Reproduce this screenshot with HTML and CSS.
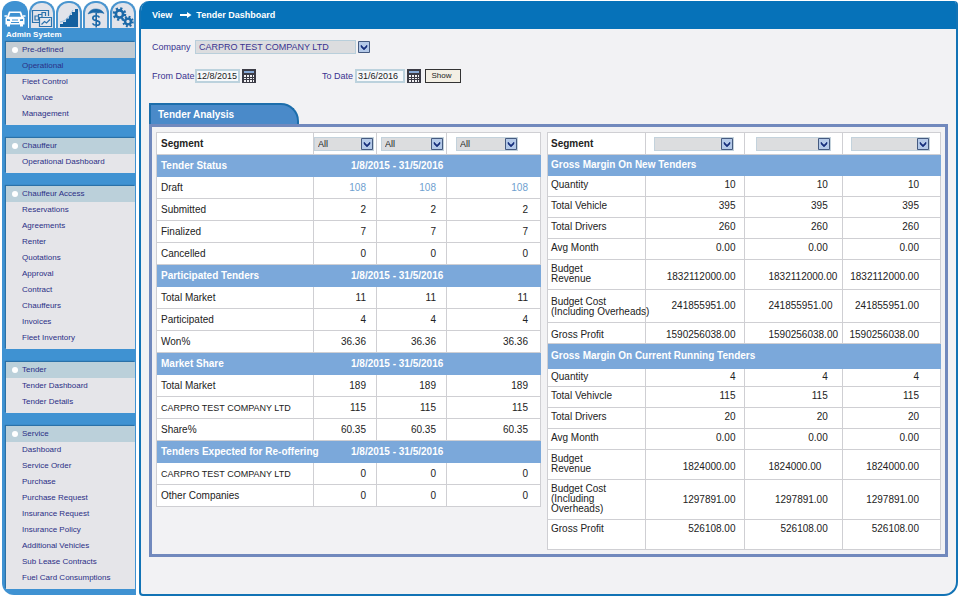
FILE: index.html
```html
<!DOCTYPE html>
<html lang="en">
<head>
    <meta charset="UTF-8">
    <meta name="viewport" content="width=device-width, initial-scale=1.0">
    <title>Tender Dashboard</title>
    <link rel="stylesheet" href="styles.css">
</head>
<body>
    <div class="sidebar">
        <div class="tabs">
            <button class="tab active" aria-label="Fleet">
                <svg viewBox="0 0 22 22" width="22" height="22">
                    <path d="M5 5.500h12l2 5 1.500 1.500v6.500h-1.500v2h-3v-2H6v2H3v-2H1.500V12L3 10.500z" fill="#fff"/>
                    <path d="M6.300 7h9.400l1.300 3.800H5z" fill="#3f92d2"/>
                    <path d="M8 14h6M7 16.500h8" stroke="#3f92d2" stroke-width="1"/>
                    <path d="M3 13l3 .5v1.500H3zM19 13l-3 .5v1.500h3z" fill="#3f92d2"/>
                    <path d="M.5 10h2.500M19 10h2.500" stroke="#fff" stroke-width="1.500"/>
                </svg>
            </button>
            <button class="tab" aria-label="Charts">
                <svg viewBox="0 0 22 22" width="22" height="22" fill="none" stroke="#2b72ad" stroke-width="1.200">
                    <path d="M8 16.500H1.500v-12h16V10"/>
                    <path d="M4 14v-4h3.500v4zM7.500 14V8.500H11V12M11 10V6.500h3.500V10"/>
                    <path d="M8.500 11.500h12v9h-12z" fill="#e3e7ee"/>
                    <path d="M10.500 18.500l3-3 2 1.500 3.500-3.500"/>
                </svg>
            </button>
            <button class="tab" aria-label="Growth">
                <svg viewBox="0 0 22 22" width="22" height="22">
                    <path d="M2 21v-3h3v-2h3v-3.500h3V9h3V6h3V3h3v18z" fill="#14609f"/>
                    <path d="M2 16c6-1 9-5 13-12" stroke="#8fbbe0" stroke-width="1" fill="none"/>
                </svg>
            </button>
            <button class="tab" aria-label="Insurance">
                <svg viewBox="0 0 22 22" width="22" height="22" fill="none" stroke="#1c69a8" stroke-width="1.600">
                    <path d="M3 8C5 4 8 2.500 12 3c3 .3 5.500 1.500 7 4.500-2-1-4-1-6-.5-3-1-6-.8-10 1z" fill="#1c69a8" stroke-width=".5"/>
                    <path d="M14.500 11.500c-.7-1.200-1.900-1.700-3.400-1.700-2 0-3.300.9-3.300 2.400 0 3.300 7 1.500 7 4.700 0 1.500-1.500 2.400-3.500 2.400-1.800 0-3.100-.7-3.800-2M11.200 7v14.500"/>
                </svg>
            </button>
            <button class="tab" aria-label="Settings">
                <svg viewBox="0 0 22 22" width="22" height="22" fill="none" stroke="#1c69a8">
                    <circle cx="7.500" cy="8" r="3.600" stroke-width="2.600"/>
                    <circle cx="7.500" cy="8" r="5.600" stroke-width="2.400" stroke-dasharray="2.200 2.200"/>
                    <circle cx="16" cy="15.500" r="2.900" stroke-width="2.400"/>
                    <circle cx="16" cy="15.500" r="4.700" stroke-width="2.200" stroke-dasharray="1.850 1.850"/>
                </svg>
            </button>
        </div>
        <div class="rail">
            <div class="rail-title">Admin System</div>
            <ul class="menu">
                <li class="menu-head grey">Pre-defined</li>
                <li class="selected"><a href="#">Operational</a></li>
                <li><a href="#">Fleet Control</a></li>
                <li><a href="#">Variance</a></li>
                <li><a href="#">Management</a></li>
            </ul>
            <ul class="menu">
                <li class="menu-head">Chauffeur</li>
                <li><a href="#">Operational Dashboard</a></li>
            </ul>
            <ul class="menu">
                <li class="menu-head">Chauffeur Access</li>
                <li><a href="#">Reservations</a></li>
                <li><a href="#">Agreements</a></li>
                <li><a href="#">Renter</a></li>
                <li><a href="#">Quotations</a></li>
                <li><a href="#">Approval</a></li>
                <li><a href="#">Contract</a></li>
                <li><a href="#">Chauffeurs</a></li>
                <li><a href="#">Invoices</a></li>
                <li><a href="#">Fleet Inventory</a></li>
            </ul>
            <ul class="menu">
                <li class="menu-head">Tender</li>
                <li><a href="#">Tender Dashboard</a></li>
                <li><a href="#">Tender Details</a></li>
            </ul>
            <ul class="menu">
                <li class="menu-head">Service</li>
                <li><a href="#">Dashboard</a></li>
                <li><a href="#">Service Order</a></li>
                <li><a href="#">Purchase</a></li>
                <li><a href="#">Purchase Request</a></li>
                <li><a href="#">Insurance Request</a></li>
                <li><a href="#">Insurance Policy</a></li>
                <li><a href="#">Additional Vehicles</a></li>
                <li><a href="#">Sub Lease Contracts</a></li>
                <li><a href="#">Fuel Card Consumptions</a></li>
            </ul>
        </div>
    </div>

    <div class="main">
        <div class="header">
            <span>View</span>
            <svg viewBox="0 0 12 8" width="12" height="8"><path d="M0 4h9" stroke="#fff" stroke-width="2"/><path d="M7 1l4.500 3L7 7z" fill="#fff"/></svg>
            <span>Tender Dashboard</span>
        </div>

        <form class="filters">
            <div class="filter-row">
                <label class="lead" for="company">Company</label>
                <select id="company" class="company"><option>CARPRO TEST COMPANY LTD</option></select>
            </div>
            <div class="filter-row">
                <label class="lead" for="from">From Date</label>
                <input class="date from" type="text" id="from" value="12/8/2015">
                <button type="button" class="cal" aria-label="Pick from date">
                    <svg viewBox="0 0 14 14" width="14" height="14"><path d="M0 0h14v14H0z" fill="#3c3c46"/><path d="M2 2h10v2H2z" fill="#86a9d6"/><path d="M2 6h2v2H2zM5 6h2v2H5zM8 6h2v2H8zM11 6h1v2h-1zM2 9h2v1H2zM5 9h2v1H5zM8 9h2v1H8zM11 9h1v1h-1zM2 11h2v2H2zM5 11h2v2H5zM8 11h2v2H8zM11 11h1v2h-1z" fill="#f2f2f4"/></svg>
                </button>
                <label class="to-label" for="to">To Date</label>
                <input class="date to" type="text" id="to" value="31/6/2016">
                <button type="button" class="cal" aria-label="Pick to date">
                    <svg viewBox="0 0 14 14" width="14" height="14"><path d="M0 0h14v14H0z" fill="#3c3c46"/><path d="M2 2h10v2H2z" fill="#86a9d6"/><path d="M2 6h2v2H2zM5 6h2v2H5zM8 6h2v2H8zM11 6h1v2h-1zM2 9h2v1H2zM5 9h2v1H5zM8 9h2v1H8zM11 9h1v1h-1zM2 11h2v2H2zM5 11h2v2H5zM8 11h2v2H8zM11 11h1v2h-1z" fill="#f2f2f4"/></svg>
                </button>
                <button type="button" class="show">Show</button>
            </div>
        </form>

        <div class="analysis">
            <h2 class="analysis-tab">Tender Analysis</h2>
            <div class="panel">
                <table class="grid status">
                    <colgroup><col class="s1"><col class="s2"><col class="s3"><col class="s4"></colgroup>
                    <tr class="segment">
                        <th>Segment</th>
                        <td><select aria-label="Segment 1"><option>All</option></select></td>
                        <td><select aria-label="Segment 2"><option>All</option></select></td>
                        <td><select aria-label="Segment 3"><option>All</option></select></td>
                    </tr>
                    <tr class="band"><th>Tender Status</th><th colspan="3">1/8/2015 - 31/5/2016</th></tr>
                    <tr><td>Draft</td><td><a href="#">108</a></td><td><a href="#">108</a></td><td><a href="#">108</a></td></tr>
                    <tr><td>Submitted</td><td>2</td><td>2</td><td>2</td></tr>
                    <tr><td>Finalized</td><td>7</td><td>7</td><td>7</td></tr>
                    <tr><td>Cancelled</td><td>0</td><td>0</td><td>0</td></tr>
                    <tr class="band"><th>Participated Tenders</th><th colspan="3">1/8/2015 - 31/5/2016</th></tr>
                    <tr><td>Total Market</td><td>11</td><td>11</td><td>11</td></tr>
                    <tr><td>Participated</td><td>4</td><td>4</td><td>4</td></tr>
                    <tr><td>Won%</td><td>36.36</td><td>36.36</td><td>36.36</td></tr>
                    <tr class="band"><th>Market Share</th><th colspan="3">1/8/2015 - 31/5/2016</th></tr>
                    <tr><td>Total Market</td><td>189</td><td>189</td><td>189</td></tr>
                    <tr><td class="name">CARPRO TEST COMPANY LTD</td><td>115</td><td>115</td><td>115</td></tr>
                    <tr><td>Share%</td><td>60.35</td><td>60.35</td><td>60.35</td></tr>
                    <tr class="band"><th>Tenders Expected for Re-offering</th><th colspan="3">1/8/2015 - 31/5/2016</th></tr>
                    <tr><td class="name">CARPRO TEST COMPANY LTD</td><td>0</td><td>0</td><td>0</td></tr>
                    <tr><td>Other Companies</td><td>0</td><td>0</td><td>0</td></tr>
                </table>

                <table class="grid margin">
                    <colgroup><col class="m1"><col class="m2"><col class="m2"><col class="m2"></colgroup>
                    <tr class="segment">
                        <th>Segment</th>
                        <td><select aria-label="Margin segment 1"><option></option></select></td>
                        <td><select aria-label="Margin segment 2"><option></option></select></td>
                        <td><select aria-label="Margin segment 3"><option></option></select></td>
                    </tr>
                    <tr class="band"><th colspan="4">Gross Margin On New Tenders</th></tr>
                    <tr><td>Quantity</td><td>10</td><td>10</td><td>10</td></tr>
                    <tr><td>Total Vehicle</td><td>395</td><td>395</td><td>395</td></tr>
                    <tr><td>Total Drivers</td><td>260</td><td>260</td><td>260</td></tr>
                    <tr><td>Avg Month</td><td>0.00</td><td>0.00</td><td>0.00</td></tr>
                    <tr class="revenue"><td>Budget<br>Revenue</td><td>1832112000.00</td><td class="long">1832112000.00</td><td>1832112000.00</td></tr>
                    <tr class="cost"><td>Budget Cost<br>(Including Overheads)</td><td>241855951.00</td><td class="long">241855951.00</td><td>241855951.00</td></tr>
                    <tr class="profit"><td>Gross Profit</td><td>1590256038.00</td><td class="long">1590256038.00</td><td>1590256038.00</td></tr>
                    <tr class="band tall"><th colspan="4">Gross Margin On Current Running Tenders</th></tr>
                    <tr class="short"><td>Quantity</td><td>4</td><td>4</td><td>4</td></tr>
                    <tr><td>Total Vehivcle</td><td>115</td><td>115</td><td>115</td></tr>
                    <tr><td>Total Drivers</td><td>20</td><td>20</td><td>20</td></tr>
                    <tr><td>Avg Month</td><td>0.00</td><td>0.00</td><td>0.00</td></tr>
                    <tr class="revenue"><td>Budget<br>Revenue</td><td>1824000.00</td><td class="long">1824000.00</td><td>1824000.00</td></tr>
                    <tr class="cost three"><td>Budget Cost<br>(Including<br>Overheads)</td><td>1297891.00</td><td>1297891.00</td><td>1297891.00</td></tr>
                    <tr class="last"><td>Gross Profit</td><td>526108.00</td><td>526108.00</td><td>526108.00</td></tr>
                </table>
            </div>
        </div>
    </div>
</body>
</html>
```

FILE: styles.css
```css
* {
    box-sizing: border-box;
}
body {
    display: flex;
    gap: 3px;
    margin: 0;
    padding: 1px 2px 2px 2px;
    min-height: 100vh;
    background: #fff;
    font-family: "Liberation Sans", Arial, sans-serif;
    font-size: 10px;
    line-height: 10px;
    color: #222;
}
button, input, select {
    font-family: inherit;
    margin: 0;
}
a {
    color: inherit;
    text-decoration: none;
}

/* sidebar */
.sidebar {
    display: flex;
    flex-direction: column;
    flex: 0 0 133px;
    padding-bottom: 1px;
}
.tabs {
    display: grid;
    grid-template-columns: repeat(5, 1fr);
    gap: 1px;
}
.tab {
    display: flex;
    align-items: flex-end;
    justify-content: center;
    height: 27px;
    padding: 0;
    border: 2px solid #4a95cf;
    border-bottom: 0;
    border-radius: 12px 12px 0 0;
    background: #e1e3ea;
}
.tab svg {
    flex: none;
}
.tab.active {
    border-color: #3f92d2;
    background: #3f92d2;
}
.rail {
    flex: 1;
    padding: 0 1px 0 4px;
    background: #3f92d2;
    border-radius: 0 0 0 12px;
}
.rail-title {
    padding: 3px 0;
    height: 14px;
    font-size: 8px;
    line-height: 8px;
    font-weight: bold;
    color: #fff;
}
.menu {
    list-style: none;
    margin: 0 0 13px;
    padding: 0 0 3px;
    background: #e5e5e9;
    box-shadow: -1px -1px 1px #2a71a8;
    font-size: 8px;
    line-height: 16px;
    color: #2b2f86;
}
.rail .menu:last-child {
    margin-bottom: 4px;
}
.menu li {
    padding-left: 16px;
}
.menu .menu-head {
    display: flex;
    align-items: center;
    gap: 4px;
    padding-left: 6px;
    background: #bbd0da;
}
.menu .menu-head.grey {
    background: #c3ccd3;
}
.menu-head::before {
    content: "";
    width: 6px;
    height: 6px;
    border-radius: 3px;
    background: #fff;
}
.menu .selected {
    background: #3f92d2;
}

/* main frame */
.main {
    flex: 1;
    min-width: 0;
    padding-bottom: 35px;
    background: #f2f2f4;
    border: 2px solid #1273b5;
    border-top: 0;
    border-radius: 10px 4px 14px 4px;
    overflow: hidden;
}
.header {
    display: flex;
    align-items: center;
    gap: 8px;
    height: 28px;
    padding-left: 11px;
    background: #0672b9;
    color: #fff;
    font-size: 9px;
    font-weight: bold;
}
.header svg {
    margin-right: -4px;
}
.filters {
    padding: 11px 11px 0;
    font-size: 9px;
    color: #3a3390;
}
.filter-row {
    display: flex;
    align-items: center;
    height: 14px;
    margin-bottom: 15px;
    white-space: nowrap;
}
.lead {
    flex: 0 0 43px;
}
.to-label {
    flex: 0 0 33px;
    margin-left: 66px;
}
select {
    appearance: none;
    height: 14px;
    padding: 0 14px 0 3px;
    border: 1px solid #c3d2dc;
    border-radius: 0;
    background: #dcdddf url("data:image/svg+xml,%3Csvg xmlns='http://www.w3.org/2000/svg' width='12' height='12'%3E%3Cpath d='M.5 .5h11v11H.5z' fill='%23b4c9e8' stroke='%23455a80'/%3E%3Cpath d='M3 4l3 3 3-3v2L6 9 3 6z' fill='%23162f7c' stroke='%23162f7c' stroke-width='.5'/%3E%3C/svg%3E") right center no-repeat;
    font-size: 9px;
    line-height: 10px;
    color: #222;
}
/* the company arrow stands apart from its box */
.company {
    width: 175px;
    padding-left: 4px;
    border: 0;
    background-color: transparent;
    background-image: url("data:image/svg+xml,%3Csvg xmlns='http://www.w3.org/2000/svg' width='12' height='12'%3E%3Cpath d='M.5 .5h11v11H.5z' fill='%23b4c9e8' stroke='%23455a80'/%3E%3Cpath d='M3 4l3 3 3-3v2L6 9 3 6z' fill='%23162f7c' stroke='%23162f7c' stroke-width='.5'/%3E%3C/svg%3E"), linear-gradient(#dcdddf, #dcdddf), linear-gradient(#b9cfdb, #b9cfdb);
    background-position: right center, 1px center, left center;
    background-size: 12px 12px, calc(100% - 16px) 12px, calc(100% - 14px) 14px;
    background-repeat: no-repeat;
    color: #3a3390;
}
.date {
    height: 14px;
    padding: 0 1px;
    border: 2px solid #bcd2dd;
    background: #f7f9fb;
    font-size: 9px;
    color: #222;
}
.date.from {
    width: 45px;
    padding: 0;
}
.date.to {
    width: 50px;
}
.cal {
    display: flex;
    margin-left: 2px;
    padding: 0;
    border: 0;
    background: none;
}
.show {
    width: 36px;
    height: 14px;
    margin-left: 4px;
    padding: 0 3px 0 0;
    border: 1px solid #333;
    background: #f3efe4;
    font-size: 8px;
    line-height: 10px;
    color: #222;
}

/* analysis panel */
.analysis {
    padding: 5px 8px 0 8px;
}
.analysis-tab {
    width: 150px;
    margin: 0;
    padding: 5px 7px 4px;
    border: 2px solid #1d6eab;
    border-bottom: 0;
    border-radius: 0 18px 0 0;
    background: #4a8ac9;
    font-size: 10px;
    line-height: 10px;
    color: #fff;
}
.panel {
    display: grid;
    grid-template-columns: 386fr 395fr;
    gap: 6px;
    align-items: start;
    padding: 5px 4px 4px;
    border: 3px solid #7189bd;
}
.grid {
    width: 100%;
    table-layout: fixed;
    border-collapse: separate;
    border-spacing: 0;
    border-top: 1px solid #cfcfd3;
    border-left: 1px solid #cfcfd3;
    background: #fff;
}
.grid td, .grid th {
    height: 22px;
    padding: 0 10px 0 4px;
    border-right: 1px solid #cfcfd3;
    border-bottom: 1px solid #cfcfd3;
    text-align: right;
    white-space: nowrap;
    color: #222;
}
.grid td:first-child, .grid th {
    padding-right: 0;
    text-align: left;
}
.grid td a {
    color: #6f9fd0;
}
.grid .band th {
    border-color: #7ba8da;
    background: #7ba8da;
    color: #fff;
}
.grid .segment td {
    padding: 0 2px 0 0;
    text-align: left;
}
.grid select {
    display: block;
    width: 100%;
}
.s1 { width: 157px; }
.s2 { width: 63px; }
.s3 { width: 70px; }

.status td:last-child {
    padding-right: 12px;
}
.status .band th:last-child {
    padding-left: 37px;
}
.status td.name {
    font-size: 9px;
}
.status .segment td:nth-child(3) {
    padding-left: 4px;
}
.status .segment td:nth-child(4) {
    padding: 0 22px 0 9px;
}

.m1 { width: 25%; }
.m2 { width: 25%; }

.margin td, .margin th {
    height: 21px;
    padding: 4px 8px 0 3px;
    vertical-align: top;
}
.margin td:nth-child(3) {
    padding-right: 14px;
}
.margin td:nth-child(4) {
    padding-right: 21px;
}
.margin .segment td, .margin .segment th {
    height: 22px;
    vertical-align: middle;
}
.margin .segment th {
    padding-top: 0;
}
.margin .segment td {
    padding: 0 10px 0 8px;
}
.margin .segment td:nth-child(3) {
    padding: 0 11px;
}
.margin .band th {
    padding-top: 5px;
}
.margin .band.tall th {
    height: 25px;
    padding-top: 7px;
}
.margin .short td {
    height: 18px;
    padding-top: 3px;
}
.margin td.long {
    padding-left: 24px;
    padding-right: 0;
    text-align: left;
}
.margin .revenue td {
    height: 30px;
}
.margin .revenue td:not(:first-child) {
    padding-top: 12px;
}
.margin .cost td {
    height: 33px;
    padding-top: 7px;
}
.margin .cost td:not(:first-child) {
    padding-top: 0;
    vertical-align: middle;
}
.margin .cost.three td {
    height: 40px;
}
.margin .cost.three td:first-child {
    padding-top: 4px;
}
.margin .profit td {
    padding-top: 7px;
}
.margin .last td {
    height: 30px;
}
```
